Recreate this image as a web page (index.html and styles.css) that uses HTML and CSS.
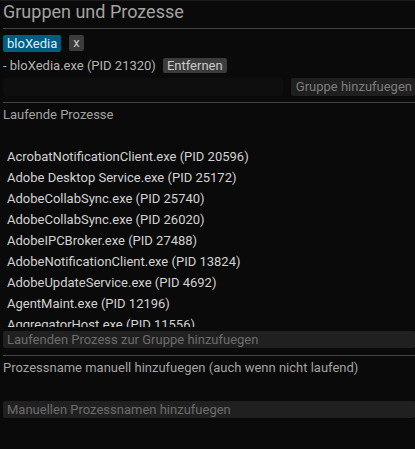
FILE: index.html
```html
<!DOCTYPE html>
<html lang="de">
<head>
<meta charset="utf-8">
<title>Gruppen und Prozesse</title>
<link rel="stylesheet" href="styles.css">
</head>
<body>
<div class="topstrip"></div>
<main class="panel">
  <h1 class="title">Gruppen und Prozesse</h1>
  <div class="sep"></div>
  <div class="row badges">
    <span class="badge">bloXedia</span>
    <span class="btn btn-x">x</span>
  </div>
  <div class="row exe">
    <span class="exe-label">- bloXedia.exe (PID 21320)</span>
    <span class="btn btn-small">Entfernen</span>
  </div>
  <div class="row addgroup">
    <div class="groupinput"></div>
    <span class="btn btn-disabled">Gruppe hinzufuegen</span>
  </div>
  <div class="sep sep-a"></div>
  <div class="label section">Laufende Prozesse</div>
  <div class="list">
    <div class="item">AcrobatNotificationClient.exe (PID 20596)</div>
    <div class="item">Adobe Desktop Service.exe (PID 25172)</div>
    <div class="item">AdobeCollabSync.exe (PID 25740)</div>
    <div class="item">AdobeCollabSync.exe (PID 26020)</div>
    <div class="item">AdobeIPCBroker.exe (PID 27488)</div>
    <div class="item">AdobeNotificationClient.exe (PID 13824)</div>
    <div class="item">AdobeUpdateService.exe (PID 4692)</div>
    <div class="item">AgentMaint.exe (PID 12196)</div>
    <div class="item">AggregatorHost.exe (PID 11556)</div>
  </div>
  <div class="field field1">Laufenden Prozess zur Gruppe hinzufuegen</div>
  <div class="sep sep-b"></div>
  <div class="label section2">Prozessname manuell hinzufuegen (auch wenn nicht laufend)</div>
  <div class="field field2">Manuellen Prozessnamen hinzufuegen</div>
</main>
</body>
</html>
```
FILE: styles.css
```css
html, body {
  margin: 0;
  padding: 0;
  background: #0a0a0a;
  height: 100%;
  overflow: hidden;
}
body {
  font-family: Roboto, "Noto Sans", sans-serif;
  font-size: 13px;
  color: #a3a3a3;
}
.topstrip {
  height: 1px;
  background: #1b1b1b;
}
.panel {
  padding-left: 3px;
  display: flex;
  flex-direction: column;
}
.title {
  margin: 0;
  height: 27px;
  line-height: 22px;
  font-size: 18px;
  font-weight: 400;
  color: #a3a3a3;
  white-space: nowrap;
}
.sep {
  height: 1px;
  background: #444444;
  flex: none;
}
.row {
  display: flex;
  align-items: flex-start;
  flex: none;
}
.badges {
  margin-top: 6px;
  gap: 8px;
  height: 17px;
}
.badge {
  background: #005c80;
  color: #dcefff;
  height: 16px;
  line-height: 16px;
  padding: 1px 4px 0;
  border-radius: 2px;
}
.btn {
  background: #3c3c3c;
  color: #cacaca;
  border-radius: 2px;
  white-space: nowrap;
}
.btn-x {
  height: 16px;
  line-height: 16px;
  padding: 0 4px;
}
.exe {
  margin-top: 6px;
  height: 15px;
  gap: 7px;
}
.exe-label {
  color: #b4b4b4;
  line-height: 15px;
  white-space: nowrap;
}
.btn-small {
  height: 15px;
  line-height: 15px;
  padding: 0 4px;
}
.addgroup {
  margin-top: 5px;
  height: 18px;
  justify-content: space-between;
}
.groupinput {
  flex: 1;
  margin-right: 8px;
  height: 18px;
  background: #0e0e0e;
  border-radius: 2px;
}
.btn-disabled {
  flex: none;
  background: #1f1f1f;
  color: #7d7d7d;
  height: 18px;
  line-height: 18px;
  padding: 0 3px 0 5px;
}
.sep-a { margin-top: 6px; }
.label {
  height: 16px;
  line-height: 16px;
  white-space: nowrap;
  flex: none;
}
.section { margin-top: 4px; }
.list {
  box-sizing: border-box;
  height: 204px;
  overflow: hidden;
  padding: 26px 0 0 4px;
  display: flex;
  flex-direction: column;
  gap: 5px;
  flex: none;
}
.item {
  color: #d2d2d2;
  height: 16px;
  line-height: 16px;
  flex: none;
  white-space: nowrap;
}
.field {
  height: 17px;
  line-height: 17px;
  background: #202020;
  color: #6c6c6c;
  padding-left: 4px;
  border-radius: 2px;
  white-space: nowrap;
  flex: none;
}
.field1 { margin-top: 4px; }
.sep-b { margin-top: 7px; }
.section2 { margin-top: 4px; }
.field2 { margin-top: 25px; }
```
